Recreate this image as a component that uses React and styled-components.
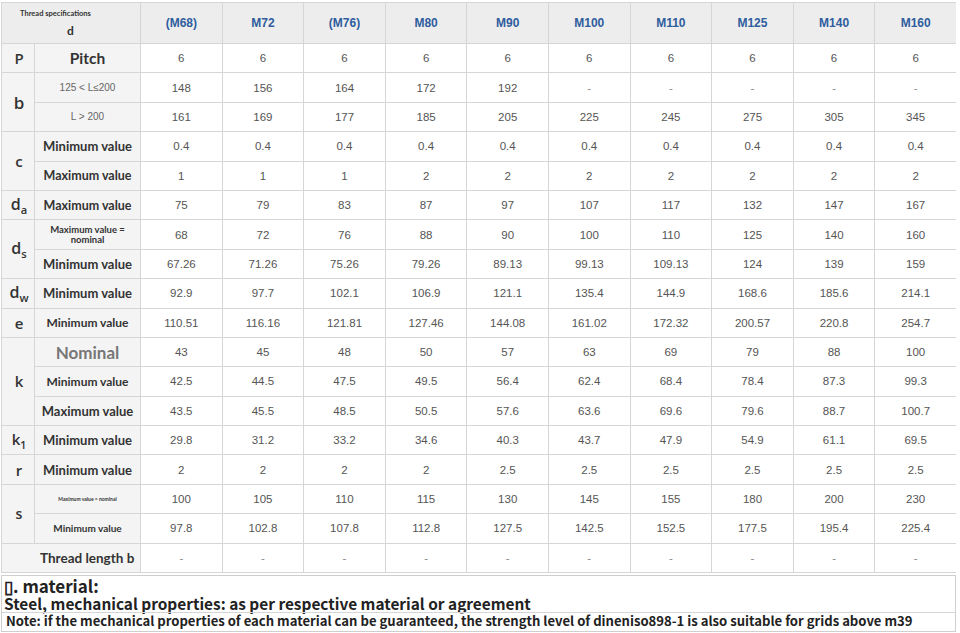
import styled, { createGlobalStyle } from "styled-components";

const GlobalStyle = createGlobalStyle`
  body {
    margin: 0;
    background: #ffffff;
    font-family: "Liberation Sans", Arial, sans-serif;
  }
`;

const sizes = ["(M68)", "M72", "(M76)", "M80", "M90", "M100", "M110", "M125", "M140", "M160"];

const rows = [
  { sym: "P", symSize: 15, symSpan: 1, label: "Pitch", size: 15.5, values: ["6", "6", "6", "6", "6", "6", "6", "6", "6", "6"] },
  { sym: "b", symSize: 17, symSpan: 2, label: "125 < L≤200", size: 10, plain: true, values: ["148", "156", "164", "172", "192", "-", "-", "-", "-", "-"] },
  { label: "L > 200", size: 10, plain: true, values: ["161", "169", "177", "185", "205", "225", "245", "275", "305", "345"] },
  { sym: "c", symSize: 15, symSpan: 2, label: "Minimum value", size: 13, values: ["0.4", "0.4", "0.4", "0.4", "0.4", "0.4", "0.4", "0.4", "0.4", "0.4"] },
  { label: "Maximum value", size: 12.5, values: ["1", "1", "1", "2", "2", "2", "2", "2", "2", "2"] },
  { sym: "d", sub: "a", symSize: 16, symSpan: 1, label: "Maximum value", size: 12.5, values: ["75", "79", "83", "87", "97", "107", "117", "132", "147", "167"] },
  { sym: "d", sub: "s", symSize: 16, symSpan: 2, label: "Maximum value =\nnominal", size: 9.5, tight: true, values: ["68", "72", "76", "88", "90", "100", "110", "125", "140", "160"] },
  { label: "Minimum value", size: 13, values: ["67.26", "71.26", "75.26", "79.26", "89.13", "99.13", "109.13", "124", "139", "159"] },
  { sym: "d", sub: "w", symSize: 16, symSpan: 1, label: "Minimum value", size: 13, values: ["92.9", "97.7", "102.1", "106.9", "121.1", "135.4", "144.9", "168.6", "185.6", "214.1"] },
  { sym: "e", symSize: 15, symSpan: 1, label: "Minimum value", size: 12, values: ["110.51", "116.16", "121.81", "127.46", "144.08", "161.02", "172.32", "200.57", "220.8", "254.7"] },
  { sym: "k", symSize: 15, symSpan: 3, label: "Nominal", size: 17, grey: true, values: ["43", "45", "48", "50", "57", "63", "69", "79", "88", "100"] },
  { label: "Minimum value", size: 12, values: ["42.5", "44.5", "47.5", "49.5", "56.4", "62.4", "68.4", "78.4", "87.3", "99.3"] },
  { label: "Maximum value", size: 13, values: ["43.5", "45.5", "48.5", "50.5", "57.6", "63.6", "69.6", "79.6", "88.7", "100.7"] },
  { sym: "k", sub: "1", symSize: 15, symSpan: 1, label: "Minimum value", size: 13, values: ["29.8", "31.2", "33.2", "34.6", "40.3", "43.7", "47.9", "54.9", "61.1", "69.5"] },
  { sym: "r", symSize: 15, symSpan: 1, label: "Minimum value", size: 13, values: ["2", "2", "2", "2", "2.5", "2.5", "2.5", "2.5", "2.5", "2.5"] },
  { sym: "s", symSize: 14, symSpan: 2, label: "Maximum value = nominal", size: 5, values: ["100", "105", "110", "115", "130", "145", "155", "180", "200", "230"] },
  { label: "Minimum value", size: 10, values: ["97.8", "102.8", "107.8", "112.8", "127.5", "142.5", "152.5", "177.5", "195.4", "225.4"] },
];

const App = () => (
  <Page>
    <GlobalStyle />
    <Table>
      <colgroup>
        <col style={{ width: 33 }} />
        <col style={{ width: 106 }} />
        {sizes.map((s) => (
          <col key={s} style={{ width: 81.6 }} />
        ))}
      </colgroup>
      <thead>
        <HeadRow>
          <CornerCell colSpan={2}>
            <SpecTitle>Thread specifications</SpecTitle>
            <SpecD>d</SpecD>
          </CornerCell>
          {sizes.map((s) => (
            <SizeCell key={s}>{s}</SizeCell>
          ))}
        </HeadRow>
      </thead>
      <tbody>
        {rows.map((row, i) => (
          <Row key={i}>
            {row.sym && (
              <SymCell rowSpan={row.symSpan} $size={row.symSize}>
                {row.sym}
                {row.sub && <Sub>{row.sub}</Sub>}
              </SymCell>
            )}
            <LabelCell $size={row.size} $plain={row.plain} $grey={row.grey} $tight={row.tight}>
              {row.label}
            </LabelCell>
            {row.values.map((v, j) => (
              <ValueCell key={j} $dash={v === "-"}>{v}</ValueCell>
            ))}
          </Row>
        ))}
        <Row>
          <LabelCell colSpan={2} $size={13.5} $offset>
            Thread length b
          </LabelCell>
          {sizes.map((s) => (
            <ValueCell key={s} $dash>-</ValueCell>
          ))}
        </Row>
      </tbody>
    </Table>
    <Notes>
      <Material>▯. material:</Material>
      <Steel>Steel, mechanical properties: as per respective material or agreement</Steel>
      <NoteLine>
        Note: if the mechanical properties of each material can be guaranteed, the strength level of dineniso898-1 is also suitable for grids above m39
      </NoteLine>
    </Notes>
  </Page>
);

export default App;

const Page = styled.div`
  width: 956px;
  height: 633px;
  padding: 2px 0 0 1px;
  box-sizing: border-box;
  overflow: hidden;
`;

const Table = styled.table`
  width: 955px;
  table-layout: fixed;
  border-collapse: collapse;
  border: 1px solid #cfcfcf;
`;

const HeadRow = styled.tr`
  height: 41px;
  background-color: #ededed;
`;

const CornerCell = styled.th`
  padding: 0;
  border: 1px solid #d6d6d6;
  text-align: left;
  vertical-align: top;
  font-family: "Lato", "Open Sans", sans-serif;
  color: #333333;
`;

const SpecTitle = styled.div`
  padding: 5px 0 0 18px;
  font-size: 7.5px;
  font-weight: 700;
  line-height: 12px;
`;

const SpecD = styled.div`
  padding: 3px 0 0 65px;
  font-size: 12px;
  font-weight: 700;
  line-height: 16px;
`;

const SizeCell = styled.th`
  padding: 0;
  border: 1px solid #d6d6d6;
  color: #2f5d9e;
  font-size: 12px;
  font-weight: 700;
  text-align: center;
`;

const Row = styled.tr`
  height: 29.4px;
`;

const SymCell = styled.td`
  padding: 0 0 0 2px;
  border: 1px solid #d6d6d6;
  background-color: #f4f4f4;
  color: #333333;
  font-family: "Open Sans", "Noto Sans", sans-serif;
  font-size: ${(p) => p.$size}px;
  font-weight: 600;
  text-align: center;
`;

const Sub = styled.sub`
  font-size: 0.7em;
  vertical-align: -0.35em;
`;

const LabelCell = styled.td`
  padding: ${(p) => (p.$offset ? "0 0 0 38px" : "0")};
  border: 1px solid #d6d6d6;
  background-color: #f4f4f4;
  color: ${(p) => (p.$grey ? "#777777" : p.$plain ? "#666666" : "#333333")};
  font-family: ${(p) => (p.$plain ? `"Liberation Sans", Arial, sans-serif` : `"Lato", "Open Sans", sans-serif`)};
  font-size: ${(p) => p.$size}px;
  font-weight: ${(p) => (p.$plain ? 400 : 700)};
  line-height: ${(p) => (p.$tight ? "10px" : "normal")};
  text-align: ${(p) => (p.$offset ? "left" : "center")};
  white-space: pre;
`;

const ValueCell = styled.td`
  padding: 0;
  border: 1px solid #d6d6d6;
  background-color: #ffffff;
  color: ${(p) => (p.$dash ? "#888888" : "#555555")};
  font-size: 11.5px;
  text-align: center;
`;

const Notes = styled.div`
  display: flex;
  flex-direction: column;
  width: 953px;
  margin-top: 2px;
  border: 1px solid #cfcfcf;
  font-family: "Noto Sans CJK SC", "Noto Sans", sans-serif;
  font-weight: 700;
  color: #222222;
`;

const Material = styled.div`
  padding-left: 2px;
  font-size: 17px;
  line-height: 19px;
`;

const Steel = styled.div`
  padding-left: 2px;
  font-size: 15.4px;
  line-height: 17px;
`;

const NoteLine = styled.div`
  padding: 0 0 2px 4px;
  border-top: 1px solid #d6d6d6;
  font-size: 13.1px;
  line-height: 16px;
  white-space: nowrap;
`;
